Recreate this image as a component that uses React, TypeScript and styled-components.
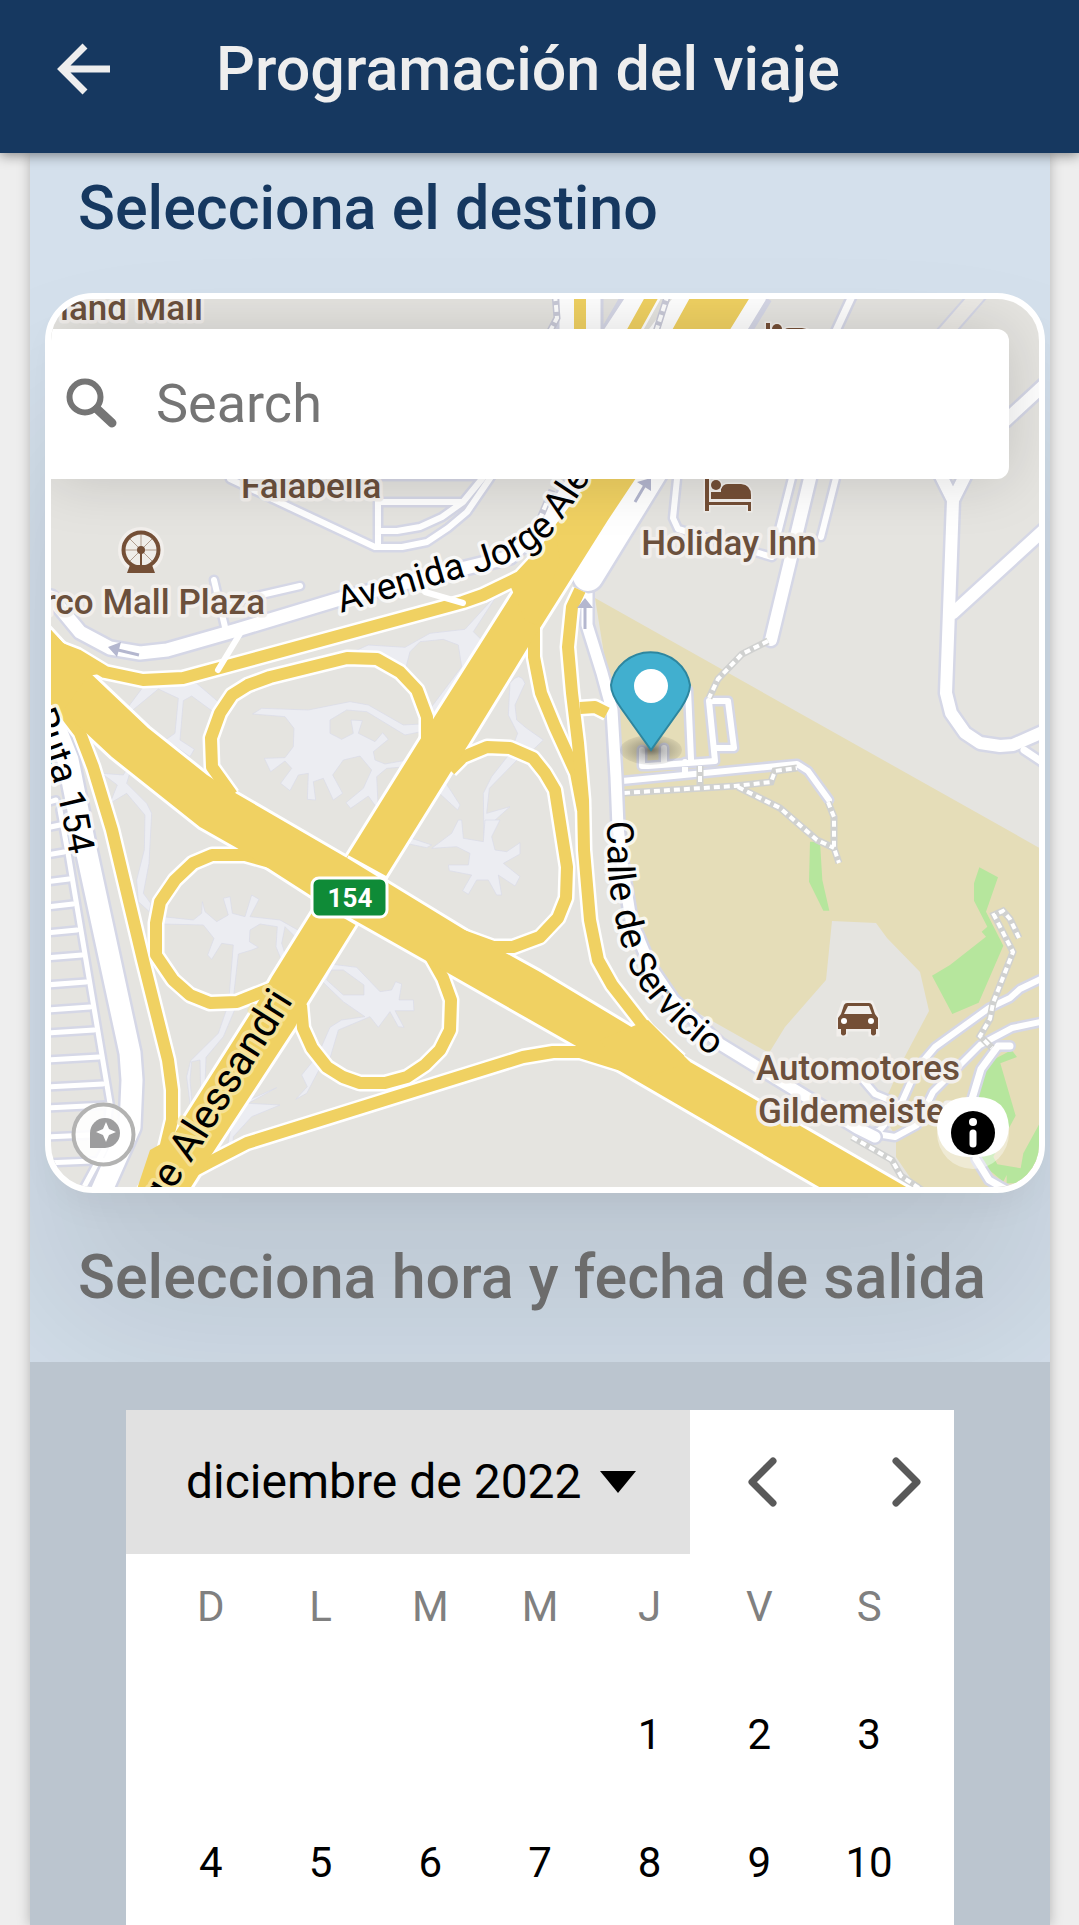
import React from 'react';
import styled, { createGlobalStyle } from 'styled-components';

const GlobalStyle = createGlobalStyle`
  *, *::before, *::after { box-sizing: border-box; }
  body { margin: 0; background: #eeeeee; font-family: Roboto, sans-serif; }
  button { font-family: inherit; border: 0; padding: 0; cursor: pointer; }
`;

const Page = styled.div`
  height: 100vh;
  overflow: hidden;
  display: flex;
  flex-direction: column;
`;

const AppBar = styled.header`
  display: flex;
  align-items: center;
  gap: 92px;
  height: 153px;
  padding: 0 44px 15px;
  background: #163860;
  color: #eeeeee;
  box-shadow: 0 2px 12px rgba(0, 0, 0, 0.45);
  z-index: 2;
  flex: none;
`;

const BackButton = styled.button`
  display: grid;
  place-items: center;
  width: 80px;
  height: 80px;
  background: none;
  color: inherit;
`;

const Title = styled.h1`
  margin: 0;
  font-size: 61px;
  line-height: 72px;
  font-weight: 500;
  white-space: nowrap;
`;

const Card = styled.main`
  flex: 1;
  margin: 0 29px 0 30px;
  display: flex;
  flex-direction: column;
  background: #bbc5cf;
  box-shadow: 0 0 12px rgba(0, 0, 0, 0.25);
`;

const Destination = styled.section`
  overflow: hidden;
  background: #d4e0ec;
`;

const SectionTitle = styled.h2<{ $muted?: boolean }>`
  position: relative;
  margin: 0;
  padding: ${(p) => (p.$muted ? '48px 48px 49px' : '19px 48px 49px')};
  font-size: 61px;
  line-height: 72px;
  font-weight: 500;
  white-space: nowrap;
  color: ${(p) => (p.$muted ? '#6c6c6c' : '#163860')};
`;

const MapFrame = styled.div`
  position: relative;
  height: 900px;
  margin: 0 5px 0 15px;
  border: 6px solid #ffffff;
  border-radius: 48px;
  overflow: hidden;
  background: #e5e4e0;
  box-shadow: 0 140px 180px 20px rgba(0, 0, 0, 0.1), 0 20px 40px -12px rgba(0, 0, 0, 0.06);
`;

const MapDrawing = styled.svg`
  display: block;
  width: 100%;
  height: 100%;
  font-family: Roboto, sans-serif;
`;

const SearchBox = styled.label`
  position: absolute;
  top: 30px;
  left: 0;
  right: 30px;
  height: 150px;
  display: flex;
  align-items: center;
  gap: 35px;
  padding: 0 12px;
  background: #ffffff;
  border-radius: 0 12px 12px 0;
  box-shadow: 0 0 60px rgba(0, 0, 0, 0.15);
`;

const SearchInput = styled.input`
  flex: 1;
  min-width: 0;
  border: 0;
  padding: 0;
  outline: 0;
  background: none;
  font: 400 54px/72px Roboto, sans-serif;
  color: #333333;
  &::placeholder { color: #757575; opacity: 1; }
`;

const Compass = styled.button`
  position: absolute;
  left: 20px;
  bottom: 20px;
  width: 65px;
  height: 65px;
  border-radius: 50%;
  background: none;
`;

const InfoButton = styled.button`
  position: absolute;
  right: 30px;
  bottom: 18px;
  width: 72px;
  height: 72px;
  background: none;
`;

const Calendar = styled.section`
  flex: 1;
  margin: 48px 96px 0;
  background: #ffffff;
`;

const CalendarBar = styled.div`
  display: flex;
  align-items: center;
  justify-content: space-between;
  height: 144px;
  padding-right: 8px;
`;

const MonthButton = styled.button`
  display: flex;
  align-items: center;
  gap: 18px;
  height: 144px;
  padding: 0 54px 0 60px;
  background: #e1e1e1;
  color: #000000;
  font-size: 48px;
  line-height: 56px;
`;

const Pager = styled.div`
  display: flex;
  gap: 64px;
`;

const PageButton = styled.button`
  display: grid;
  place-items: center;
  width: 80px;
  height: 96px;
  background: none;
`;

const Days = styled.table`
  width: calc(100% - 60px);
  margin: 0 30px;
  table-layout: fixed;
  border-collapse: collapse;
`;

const Weekday = styled.th`
  height: 116px;
  padding: 0 0 12px;
  font-size: 42px;
  font-weight: 400;
  color: #808080;
`;

const DayCell = styled.td`
  height: 128px;
  padding: 0;
  text-align: center;
`;

const DayButton = styled.button`
  width: 96px;
  height: 96px;
  background: none;
  font-size: 42px;
  color: #000000;
`;

type RoadProps = { d: string; w: number };

function Casing({ items }: { items: RoadProps[] }) {
  return (
    <g fill="none" strokeLinecap="round" strokeLinejoin="round">
      {items.map((r) => <path key={`c${r.d}`} d={r.d} stroke="#d5d7e6" strokeWidth={r.w + 5} />)}
      {items.map((r) => <path key={r.d} d={r.d} stroke="#ffffff" strokeWidth={r.w} />)}
    </g>
  );
}

const localRoads: RoadProps[] = [
  { d: 'M230 479 375 547H402L427 542 448 528 467 512 493 474', w: 6 },
  { d: 'M378 545V502H463L486 474M380 531H397L420 527 442 517 463 502', w: 6 },
  { d: 'M378 478H490', w: 2 },
  { d: 'M214 580 225 627M226 603 300 586', w: 6 },
  { d: 'M677 479 673 518 678 529 772 557 794 470', w: 6 },
  { d: 'M812 470 771 640', w: 12 },
  { d: 'M838 470 821 537', w: 6 },
  { d: 'M853 294 834 335', w: 7 },
  { d: 'M938 470 953 500 968 470M953 500 946 693 951 713 965 733 980 743 1000 746 1013 745 1045 731', w: 12 },
  { d: 'M953 613 1045 529M1005 421 1045 384', w: 12 },
  { d: 'M1024 750 1045 764', w: 7 },
  { d: 'M51 597 80 632 110 648 140 653 167 650 237 630 343 598 510 557 548 520 580 470', w: 13 },
];

const leftRoads: RoadProps[] = [
  { d: 'M40 690 68 760 84 840 130 1053 132 1080 130 1127 101 1192', w: 21 },
  { d: 'M60 810 68 853 110 1103 104 1150 84 1187', w: 5 },
  ...[803, 828, 855, 882, 907, 933, 958, 985, 1010, 1033, 1060, 1087, 1108, 1137, 1163].map((y) => ({
    d: `M46 ${y} L${Math.round(64 + (y - 853) * 0.168)} ${y - 3}`,
    w: 5,
  })),
];

const eastRoads: RoadProps[] = [
  { d: 'M642 750V766H648L715 761 709 701H728L734 748H716M664 748V762M688 690 691 759M685 762V773', w: 6 },
  { d: 'M622 781 797 764 808 771 829 800', w: 6 },
  { d: 'M863 1080 875 1094 904 1106M1045 977 1020 989 1010 998 989 1008 935 1047 917 1068 901 1104 880 1130 860 1137', w: 6 },
  { d: 'M1045 1021 1012 1028 980 1045 955 1070 933 1092 917 1125 895 1137 870 1133', w: 6 },
  { d: 'M1010 1046H998L981 1069 972 1099M976 1159 989 1180 1010 1192', w: 7 },
];

const footpaths =
  'M768 641 742 654 718 679 709 698M624 793 735 786 771 782 775 771 797 768M828 802 834 817V848L839 863M738 787 780 808 817 840 834 848M700 766V786M1019 938 1010 919 1003 911 994 915 1013 952 993 1003 990 1019 980 1036 992 1048M852 1137 892 1160 901 1176 925 1192';

const ramps = [
  'M51 645 77 655 105 672 143 680 183 678 463 602 483 595 520 577 550 545',
  'M232 795 212 767 211 738 220 713 232 695 248 685 270 677 347 658 377 659 400 672 417 690 427 717V755',
  'M55 700 80 733 93 767 112 830 143 960 168 1060 172 1090V1120L160 1170',
  'M270 862 245 855H212L193 863 175 880 160 902 156 923V955L173 980 190 995 210 1003 237 1002 275 987',
  'M301 1005 303 1028 312 1048 327 1067 343 1077 360 1083H385L407 1077 425 1065 440 1050 450 1030 451 1000 443 978 430 955',
  'M180 1178 210 1162 247 1143 523 1057 553 1052H580L625 1066',
  'M450 770 463 757 487 747 510 748 533 758 545 773 555 790 567 867 566 898 558 918 540 937 513 947H493L460 935',
  'M534 620 534 657 541 693 555 727 576 773 583 810',
  'M580 590 572 607 568 647 572 693 578 743 583 800 584 850 590 920 598 960 612 985 647 1030 680 1060',
  'M580 708 595 707 607 713',
  'M580 290V340M653 295 628 340',
];

const highways = [
  'M40 618 63 643 88 671 148 728 207 775 230 790 347 858 473 935 540 972 638 1031 690 1062 920 1195H833L613 1067 578 1047 448 973 310 895 237 848 200 827 112 757 40 690Z',
  'M692 294H752L668 430 608 520 545 620 528 647 468 745 455 765 307 1003 295 1027 210 1157 186 1195H135L180 1125 258 1002 272 977 418 743 518 585 550 532 590 479Z',
];

function Roads() {
  return (
    <g strokeLinejoin="round">
      <g fill="none" stroke="#ffffff" strokeWidth="17">
        {ramps.map((d) => <path key={d} d={d} />)}
      </g>
      <g fill="#ffffff" stroke="#ffffff" strokeWidth="6">
        {highways.map((d) => <path key={d} d={d} />)}
      </g>
      <g fill="none" stroke="#f0d162" strokeWidth="12">
        {ramps.map((d) => <path key={d} d={d} />)}
      </g>
      <g fill="#f0d162">
        <path d={highways[1]} />
        <path d="M347 858 387 880M310 895 358 923" stroke="#ffffff" strokeWidth="6" />
        <path d={highways[0]} />
        <path d="M40 618 63 643 110 672 88 676 60 715 40 690Z" />
        <path d="M510 585 555 530 560 560 536 625 525 620Z" />
        <path d="M613 1059 600 1040 648 1020 690 1062 640 1080Z" />
        <path d="M150 1150 168 1140 200 1163 186 1195H135Z" />
      </g>
    </g>
  );
}

function PaleAreas() {
  return (
    <g fill="#ecedf2" stroke="#d9dbe8" strokeWidth="2">
      <g transform="translate(30 460) scale(.33333)">
        <path d="M668 762 695 745 835 750 960 725 1015 735 1120 795 1175 792 1173 815 1125 825 1010 755 950 750 900 780V820L935 838 970 820 963 780 997 782 985 820 1035 845 1058 818 1075 838 1030 875 1035 900 1065 912 1132 900V920L1070 925 1040 950 1045 1050 1015 1008 962 1045 948 1028 1000 985 1025 930 990 888 940 900 908 945 938 1000 910 1020 880 955 850 965 857 1020 832 1018 835 940 805 945 780 992 752 970 785 925 765 903 722 935 703 895 765 893 790 860 792 805 765 770Z" />
        <path d="M340 680 500 670 570 730 552 757 485 708 460 722 450 840 493 868 480 890 432 856 403 842 435 820 445 715 385 687 300 757 295 740Z" />
        <path d="M977 572 1015 555 1125 562 1200 520 1305 508 1385 420 1405 400 1330 515 1355 540 1200 790 1205 740 1295 620 1285 555 1240 538 1170 545 1140 575 1125 633 1050 590Z" />
        <path d="M1440 670Q1470 630 1485 670L1455 735 1460 780 1490 805 1540 840 1500 878 1450 855 1463 820 1435 765ZM1440 880 1463 898 1378 985 1370 1060 1440 1040 1390 1085 1378 1150 1362 1140 1360 1000 1385 950Z" />
        <path d="M215 940 280 945 292 925 302 930 290 970 350 1030 365 1060 357 1210 340 1300 362 1330 358 1355 325 1325 320 1260 343 1170 345 1065 290 1000 240 1030 262 975ZM1245 965 1290 1035 1283 1050 1225 997Z" />
      </g>
      <g transform="translate(30 820) scale(.33333)">
        <path d="M397 290 490 300 515 280 517 245 525 275 560 305 595 285 580 235 600 230 607 280 645 290 665 225 687 238 660 290 750 300 812 335 800 355 765 320 755 370 768 410 758 430 738 380 742 320 690 312 660 330 658 365 685 382 665 390 625 402 610 535 597 533 610 375 575 370 545 418 533 405 552 355 520 315 397 312Z" />
        <path d="M590 567H615L580 650 528 712 525 800 512 805 510 720 485 725 480 780 488 870 480 850 470 770 482 722 565 640ZM900 432 980 442 1050 515 1085 510 1097 485 1115 492 1107 540 1150 540 1152 572 1095 572 1122 622 1105 620 1080 575 1045 622 1020 590 925 630 897 725 868 695 900 622 935 600 1005 590 940 545 872 480 885 455ZM940 450H905L890 480 940 525 1002 525V495ZM850 722 872 740 830 820 797 838 832 800 815 765ZM740 803 655 850 750 855 665 890 610 950 608 985 592 980 610 890 645 845Z" />
        <path d="M1130 50 1205 75 1190 83 1128 70ZM1205 85 1265 40 1285 0H1295L1300 55 1360 65 1365 0H1410L1385 50 1395 90 1430 95 1470 68V102L1420 130 1470 170 1455 198 1405 165 1415 225 1400 225 1375 180 1340 180 1315 223 1298 212 1325 165 1258 152 1255 135 1315 135 1320 100 1280 80Z" />
      </g>
    </g>
  );
}

function Poi() {
  return (
    <g>
      <g fill="#6b503c" stroke="#f2efec" strokeWidth="7" paintOrder="stroke" strokeLinejoin="round" fontSize="35" fontWeight="500">
        <text x="203" y="320" textAnchor="end">land Mall</text>
        <text x="241" y="498">Falabella</text>
        <text x="265" y="614" textAnchor="end">arco Mall Plaza</text>
        <text x="729" y="555" textAnchor="middle">Holiday Inn</text>
        <text x="858" y="1080" textAnchor="middle">Automotores</text>
        <text x="758" y="1123">Gildemeister</text>
      </g>
      {/* Ferris wheel */}
      <g transform="translate(141 550)" stroke="#744f36" fill="none">
        <circle r="21" fill="#efede9" stroke="#f2efec" strokeWidth="4" />
        <path d="M0-17V17M-17 0H17M-12-12 12 12M12-12-12 12" strokeWidth="1" strokeOpacity=".5" />
        <circle r="17.500" strokeWidth="4" />
        <circle r="4" fill="#744f36" stroke="none" />
        <path d="M-1 0H1V15H11L14 23H-14L-11 15H-1Z" fill="#744f36" stroke="none" />
      </g>
      {/* Hotel beds */}
      {[[705, 479], [766, 323]].map(([x, y]) => (
        <g key={x} transform={`translate(${x} ${y})`} fill="#744f36" stroke="#f2efec" strokeWidth="3" paintOrder="stroke">
          <path d="M0 0H4V23H46V32H43V26H4V32H0ZM6 13H16V10Q18 5 23 5H36Q46 6 46 16V20H6Z" />
          <circle cx="11" cy="6" r="5" />
        </g>
      ))}
      {/* Car */}
      <g transform="translate(838 1003)">
        <path d="M6 0H33L39 14V31H33V26H7V31H1V14Z" fill="#f2efec" stroke="#f2efec" strokeWidth="5" />
        <path fill="#744f36" fillRule="evenodd" d="M9 0H31Q33 0 34 2L37 11 40 15V26H38V31Q35 34 33 31V26H8V31Q5 34 3 31V26H0V15L3 11 6 2Q7 0 9 0ZM10 3 6 11H34L31 3Z" />
        <circle cx="6" cy="18" r="3" fill="#fff" />
        <circle cx="33" cy="18" r="3" fill="#fff" />
      </g>
    </g>
  );
}

function RoadNames() {
  return (
    <g fill="#000000" stroke="#ffffff" strokeOpacity=".75" strokeWidth="7" paintOrder="stroke" strokeLinejoin="round" fontSize="37">
      <defs>
        <path id="avenida" d="M341 613 460 578Q520 564 550 535 568 515 614 440" />
        <path id="servicio" d="M607 821 608 873Q613 920 626 957 640 1005 724 1066" />
        <path id="ruta" d="M30 714Q50 762 61 810L80 910" />
        <path id="alessandri" d="M161 1210 313 970" />
      </defs>
      <text><textPath href="#avenida">Avenida Jorge Ale</textPath></text>
      <text><textPath href="#servicio">Calle de Servicio</textPath></text>
      <text><textPath href="#ruta">Ruta 154</textPath></text>
      <text fontSize="41" stroke="#f8e7a8"><textPath href="#alessandri">ge Alessandri</textPath></text>
    </g>
  );
}

function DestinationMap() {
  return (
    <MapDrawing viewBox="51 299 988 888" preserveAspectRatio="xMidYMid slice" role="img" aria-label="Mapa del destino">
      <path fill="#e5ddb8" fillRule="evenodd" d="M595 598 1045 851V1192H920L896 1157V1137L880 1110 890 1090 903 1060 929 1011 920 972 887 938 876 923 832 921 826 980 785 1027 769 1053 675 1000 645 960 618 840 613 710Z" />
      <g fill="#b6e69d" transform="translate(540 820) scale(.33333)">
        <path d="M810 65H840L847 180 868 272H850L807 185ZM1318 142 1374 172 1338 275 1390 377 1316 548 1237 582 1176 467 1230 435 1338 350 1325 335 1342 320 1302 242V190ZM1415 690 1431 711 1381 730 1427 887 1360 1010 1372 1033 1442 1045 1450 1000 1510 890V1090H1400V1065L1390 1085 1300 1010 1280 840 1340 730Z" />
      </g>
      <path d="M1000 270 930 350" stroke="#d5d7e6" strokeWidth="18" />
      <path d="M1000 270 930 350" stroke="#eceae6" strokeWidth="14" />
      <Casing items={localRoads} />
      <Casing items={leftRoads} />
      <g fill="none">
        <path d="M760 294 735 335M698 290 655 345M637 294 613 335M569 294V335M590 294V335" stroke="#d5d7e6" strokeWidth="27" />
        <path d="M757 294 732 335M692 290 650 345M640 294 613 335M570 294V335M590 294V335" stroke="#ffffff" strokeWidth="21" />
      </g>
      <Casing items={eastRoads} />
      <g fill="none">
        <path d={footpaths} stroke="#d0d1d0" strokeWidth="7" />
        <path d={footpaths} stroke="#ffffff" strokeWidth="4" strokeDasharray="6 4" />
        <path d="M668 294 655 335M555 294 557 318 548 335M535 530 552 490" stroke="#c9cad8" strokeWidth="7" />
        <path d="M668 294 655 335M555 294 557 318 548 335M535 530 552 490" stroke="#ffffff" strokeWidth="4" strokeDasharray="7 4" />
      </g>
      <Casing items={[{ d: 'M587 590V625L602 673 612 710 616 777 618 827 623 870 631 920 650 966 673 1000 720 1044 857 1128 875 1137', w: 11 }]} />
      <Casing items={[{ d: 'M658 462 588 576', w: 30 }]} />
      <PaleAreas />
      <Roads />
      <path d="M241 632 218 670M425 592 463 603" stroke="#ffffff" strokeWidth="6" strokeLinecap="round" />
      <g stroke="#b4b7cf" strokeWidth="3" fill="#b4b7cf">
        <path d="M139 655 118 650M635 502 645 485M585 629V606" />
        <path stroke="none" d="M108 647 121 642 117 657ZM651 478 637 482 651 491ZM585 598 577 608H593Z" />
      </g>
      <Poi />
      <RoadNames />
      <rect x="312" y="878" width="75" height="39" rx="7" fill="#0f8b37" stroke="#ffffff" strokeWidth="3" />
      <text x="350" y="907" textAnchor="middle" fontSize="26" fontWeight="700" fill="#ffffff">154</text>
      <defs>
        <radialGradient id="pinShade">
          <stop offset="0" stopColor="#222" stopOpacity=".6" />
          <stop offset=".4" stopColor="#222" stopOpacity=".3" />
          <stop offset="1" stopColor="#222" stopOpacity=".08" />
        </radialGradient>
      </defs>
      <ellipse cx="651" cy="750" rx="31" ry="15" fill="url(#pinShade)" />
      <path d="M651 750 621 708Q611 694 611 685A40 39 0 0 1 690 685Q690 694 681 708Z" fill="#41afcf" stroke="#2d869f" strokeWidth="2" />
      <circle cx="651" cy="686" r="17" fill="#ffffff" />
    </MapDrawing>
  );
}

const weekdays = ['D', 'L', 'M', 'M', 'J', 'V', 'S'];
const weeks: (number | null)[][] = [
  [null, null, null, null, 1, 2, 3],
  [4, 5, 6, 7, 8, 9, 10],
];

export default function App() {
  return (
    <Page>
      <GlobalStyle />
      <AppBar>
        <BackButton aria-label="Volver">
          <svg width="54" height="52" viewBox="0 0 54 52" fill="none" stroke="currentColor" strokeWidth="7">
            <path d="M53 26H6M28 3 5 26 28 49" />
          </svg>
        </BackButton>
        <Title>Programación del viaje</Title>
      </AppBar>
      <Card>
        <Destination>
          <SectionTitle>Selecciona el destino</SectionTitle>
          <MapFrame>
            <DestinationMap />
            <SearchBox aria-label="Buscar destino">
              <svg width="58" height="58" viewBox="0 0 58 58" fill="none" stroke="#757575">
                <circle cx="22" cy="22" r="15.500" strokeWidth="6" />
                <path d="M34 34 49 48" strokeWidth="9" strokeLinecap="round" />
              </svg>
              <SearchInput type="text" placeholder="Search" />
            </SearchBox>
            <Compass aria-label="Mapbox">
              <svg width="65" height="65" viewBox="0 0 65 65">
                <circle cx="32.500" cy="32.500" r="30" fill="#ffffff" fillOpacity=".9" stroke="#b3b3b2" strokeWidth="4" />
                <path d="M19 46V31A15 15 0 1 1 34 46Z" fill="#9d9d9e" />
                <path d="M35 20 38 27 45 30 38 33 35 40 32 33 25 30 32 27Z" fill="#ffffff" />
              </svg>
            </Compass>
            <InfoButton aria-label="Información del mapa">
              <svg width="72" height="72" viewBox="0 0 72 72">
                <circle cx="36" cy="36" r="36" fill="#ffffff" fillOpacity=".4" />
                <path d="M0 30Q2 0 32 0H40Q70 0 72 30 70 60 40 60H32Q2 60 0 30Z" fill="#ffffff" />
                <circle cx="36" cy="36" r="22" fill="#000000" />
                <circle cx="36" cy="25" r="4" fill="#ffffff" />
                <path d="M36 36V47" stroke="#ffffff" strokeWidth="7" strokeLinecap="round" />
              </svg>
            </InfoButton>
          </MapFrame>
          <SectionTitle $muted>Selecciona hora y fecha de salida</SectionTitle>
        </Destination>
        <Calendar>
          <CalendarBar>
            <MonthButton>
              diciembre de 2022
              <svg width="36" height="22" viewBox="0 0 36 22"><path d="M0 0H36L18 22Z" /></svg>
            </MonthButton>
            <Pager>
              {['M27 6 6 27 27 48', 'M6 6 27 27 6 48'].map((d, i) => (
                <PageButton key={d} aria-label={i ? 'Mes siguiente' : 'Mes anterior'}>
                  <svg width="33" height="54" viewBox="0 0 33 54" fill="none" stroke="#595959" strokeWidth="7" strokeLinecap="round" strokeLinejoin="round">
                    <path d={d} />
                  </svg>
                </PageButton>
              ))}
            </Pager>
          </CalendarBar>
          <Days>
            <thead>
              <tr>{weekdays.map((d, i) => <Weekday key={i} scope="col">{d}</Weekday>)}</tr>
            </thead>
            <tbody>
              {weeks.map((week, w) => (
                <tr key={w}>
                  {week.map((day, i) => <DayCell key={i}>{day && <DayButton>{day}</DayButton>}</DayCell>)}
                </tr>
              ))}
            </tbody>
          </Days>
        </Calendar>
      </Card>
    </Page>
  );
}
